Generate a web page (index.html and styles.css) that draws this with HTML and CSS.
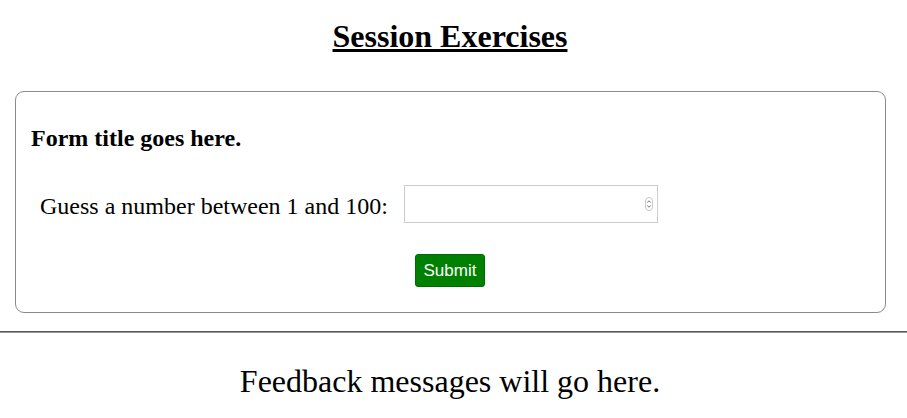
FILE: index.html
```html
<!DOCTYPE html>
<html>
<head>
<meta charset="utf-8">
<link rel="stylesheet" href="styles.css">
</head>
<body>
<h1 class="page-title">Session Exercises</h1>
<form class="exercise-form">
  <h3 class="form-title">Form title goes here.</h3>
  <div class="field-row">
    <label class="field-label" for="guess">Guess a number between 1 and 100:</label>
    <span class="input-wrap">
      <input class="field-input" id="guess" type="text">
      <span class="spinner"><svg width="8" height="14" viewBox="0 0 8 14"><rect x="0.5" y="0.5" width="7" height="13" rx="3.5" fill="#fff" stroke="#c8c8c8"/><path d="M2.3 5.6 L4 3.8 L5.7 5.6" fill="none" stroke="#666" stroke-width="0.9"/><path d="M2.3 8.4 L4 10.2 L5.7 8.4" fill="none" stroke="#666" stroke-width="0.9"/></svg></span>
    </span>
  </div>
  <div class="button-row">
    <button class="submit-btn" type="button">Submit</button>
  </div>
</form>
<div class="divider"></div>
<p class="feedback">Feedback messages will go here.</p>
</body>
</html>
```

FILE: styles.css
```css
html, body {
  margin: 0;
  padding: 0;
  background: #fff;
}
body {
  font-family: "Liberation Serif", "Times New Roman", serif;
  color: #000;
}
.page-title {
  margin: 18px 0 0 0;
  padding-right: 7px;
  font-size: 32px;
  line-height: 36px;
  font-weight: bold;
  text-align: center;
  text-decoration: underline;
}
.exercise-form {
  margin: 37px 21px 0 15px;
  border: 1px solid #8a8a8a;
  border-radius: 9px;
  padding: 32px 15px 25px 15px;
}
.form-title {
  margin: 0;
  font-size: 24px;
  line-height: 28px;
  font-weight: bold;
}
.field-row {
  display: flex;
  align-items: center;
  margin-top: 33px;
  padding-left: 9px;
}
.field-label {
  font-size: 24px;
  line-height: 28px;
  margin-right: 16px;
  padding-top: 4px;
}
.input-wrap {
  position: relative;
  display: block;
}
.field-input {
  display: block;
  box-sizing: border-box;
  width: 254px;
  height: 38px;
  margin: 0;
  border: 1px solid #cccccc;
  border-radius: 0;
  padding: 0 6px;
  font-size: 16px;
  background: #fff;
  outline: none;
}
.spinner {
  position: absolute;
  right: 5px;
  top: 12px;
  display: block;
  line-height: 0;
}
.button-row {
  display: flex;
  justify-content: center;
  margin-top: 31px;
  padding-right: 1px;
}
.submit-btn {
  box-sizing: border-box;
  height: 33px;
  width: 70px;
  padding: 0;
  border: 1px solid #006b00;
  border-radius: 3px;
  background: #008000;
  color: #fff;
  font-family: "Liberation Sans", Arial, sans-serif;
  font-size: 17px;
}
.divider {
  margin-top: 18px;
  height: 2px;
  border-top: 1px solid #555;
  border-bottom: 1px solid #999;
  box-sizing: border-box;
}
.feedback {
  margin: 30px 0 0 0;
  padding-right: 7px;
  font-size: 32px;
  line-height: 37px;
  text-align: center;
}
```
